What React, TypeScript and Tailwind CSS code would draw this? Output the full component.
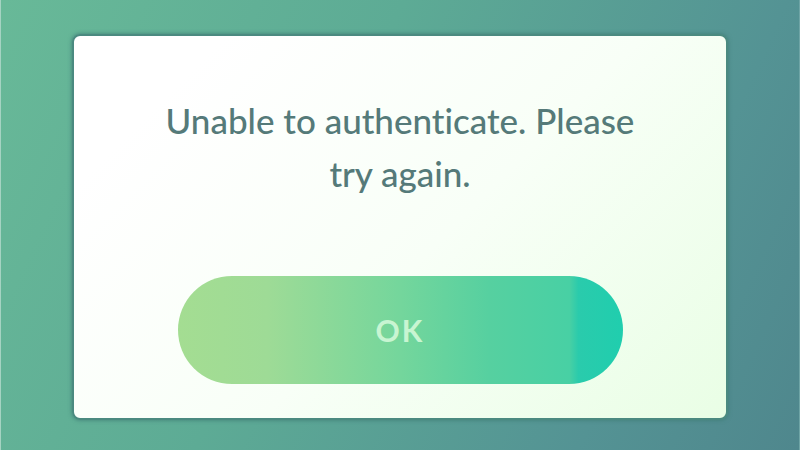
interface AlertDialogProps {
  message: string;
  action: string;
}

function AlertDialog({ message, action }: AlertDialogProps) {
  return (
    <div
      role="alertdialog"
      aria-label={message}
      className="flex w-full flex-col items-center rounded-lg border-2 border-[#4b8a80] bg-[linear-gradient(135deg,#ffffff_15%,#f8fff7_55%,#e9fee5_100%)] bg-origin-border px-12 pt-[58px] pb-[34px] shadow-[0_0_4px_#3f7c76]"
    >
      <p className="max-w-[500px] text-center text-[35px] leading-[53px] font-medium text-[#557a79] [font-variant-ligatures:none]">
        {message}
      </p>
      <button
        type="button"
        className="mt-[76px] h-[108px] w-full max-w-[445px] rounded-full bg-[linear-gradient(90deg,#a4dd92_0%,#9edb96_20%,#74d69c_50%,#56d0a0_70%,#48d0a4_88%,#2acbac_90%,#20ceae_100%)] text-[30px] font-bold tracking-[2px] text-[#c8f5d2]"
      >
        {action}
      </button>
    </div>
  );
}

export default function App() {
  return (
    <main className="flex min-h-screen items-center justify-center border-x border-l-[#a5d3c2] border-r-[#6fa5a6] bg-[linear-gradient(115deg,#68b998_0%,#5dab95_40%,#549394_78%,#4f878d_100%)] px-[71px] pt-8 pb-7 font-[Lato,sans-serif]">
      <AlertDialog message="Unable to authenticate. Please try again." action="OK" />
    </main>
  );
}
